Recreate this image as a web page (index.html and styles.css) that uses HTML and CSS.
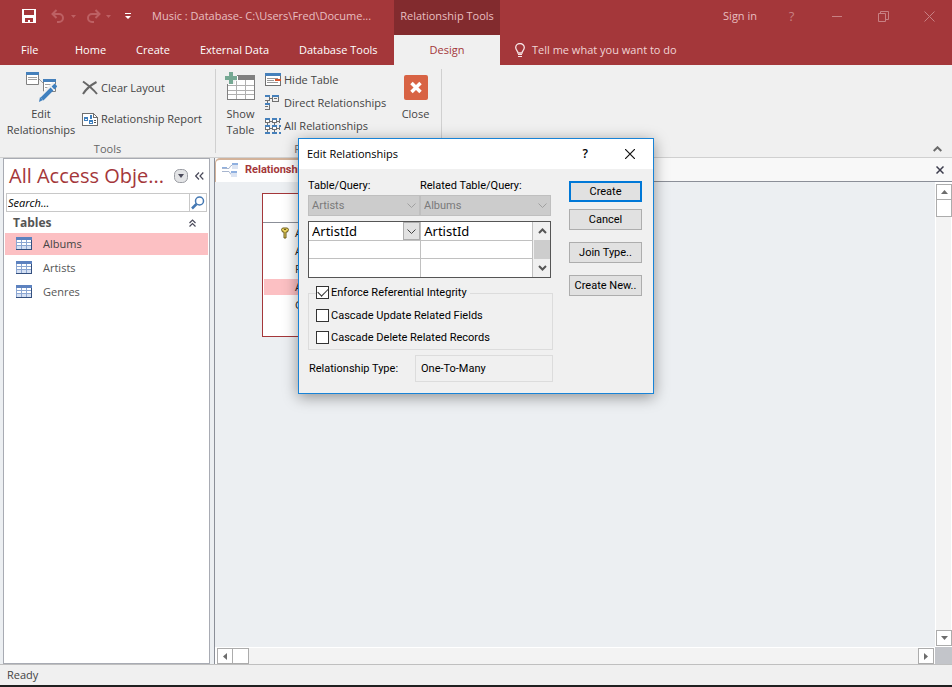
FILE: index.html
```html
<!DOCTYPE html>
<html lang="en">
<head>
  <meta charset="utf-8" />
  <title>Music : Database - Relationships</title>
  <link rel="stylesheet" href="styles.css">
</head>
<body>
  <svg class="defs" width="0" height="0">
    <symbol id="datasheet" viewBox="0 0 16 13">
      <rect width="16" height="13" fill="#34507f"/>
      <rect width="15" height="12" fill="#8ba6d2"/>
      <rect width="16" height="3" fill="#5d82bf"/>
      <path fill="#fff" d="M1 3h4v2H1zM6 3h4v2H6zM11 3h4v2h-4zM1 6h4v2H1zM6 6h4v2H6zM11 6h4v2h-4z"/>
      <path fill="#d5e0f3" d="M1 9h4v3H1zM6 9h4v3H6zM11 9h4v3h-4z"/>
    </symbol>
    <symbol id="chevron" viewBox="0 0 9 5"><path d="M.5 .5l4 4 4-4" fill="none" stroke="currentColor"/></symbol>
  </svg>

  <div class="app">
    <header class="titlebar">
      <div class="title-left">
        <div class="quick-access">
          <button type="button" aria-label="Save"><svg width="14" height="14" viewBox="0 0 14 14" shape-rendering="crispEdges"><path fill="#fff" fill-rule="evenodd" d="M0 0h14v14H0zM2 1h10v5H2zM3 9h8v4H8v-2H6v2H3z"/></svg></button>
          <button type="button" class="undo" aria-label="Undo"><svg width="26" height="14" viewBox="0 0 26 14"><path d="M5.500 1L1.500 5l4 4M2 5h6a4 4 0 0 1 0 8H6" fill="none" stroke="#bd6063" stroke-width="2"/><path fill="#bd6063" d="M20 6h5l-2.500 3z"/></svg></button>
          <button type="button" class="redo" aria-label="Redo"><svg width="26" height="14" viewBox="0 0 26 14"><path d="M9.500 1l4 4-4 4M13 5H6a4 4 0 0 0 0 8h2" fill="none" stroke="#bd6063" stroke-width="2"/><path fill="#bd6063" d="M20 6h5l-2.500 3z"/></svg></button>
          <button type="button" class="customize" aria-label="Customize"><svg width="6" height="7" viewBox="0 0 6 7"><path fill="#fff" d="M0 0h6v1H0zM0 3h6L3 6z"/></svg></button>
        </div>
        <span class="doc-title">Music : Database- C:\Users\Fred\Docume...</span>
      </div>
      <span class="context-title">Relationship Tools</span>
      <div class="window-controls">
        <a href="#">Sign in</a>
        <button type="button" aria-label="Help">?</button>
        <button type="button" aria-label="Minimize"><svg width="11" height="11" viewBox="0 0 11 11"><path d="M0 5.500h10" stroke="#c88083"/></svg></button>
        <button type="button" aria-label="Restore"><svg width="11" height="11" viewBox="0 0 11 11"><path d="M.5 2.500h7v8h-7zM2.500 2V.5h8v8H8" fill="none" stroke="#c88083"/></svg></button>
        <button type="button" aria-label="Close"><svg width="11" height="11" viewBox="0 0 11 11"><path d="M.5 .5l10 10M10.500 .5l-10 10" stroke="#c88083"/></svg></button>
      </div>
    </header>

    <nav class="tabs">
      <div class="tab-list">
        <a href="#" class="file">File</a>
        <a href="#">Home</a>
        <a href="#">Create</a>
        <a href="#">External Data</a>
        <a href="#">Database Tools</a>
      </div>
      <a href="#" class="active">Design</a>
      <a href="#" class="tell-me"><svg width="10" height="15" viewBox="0 0 10 15"><path d="M3 10C3 8 .7 7 .7 4.500a4.300 4 0 0 1 8.600 0C9.300 7 7 8 7 10z" fill="none" stroke="#f6e4e5" stroke-width="1.300"/><path fill="#f6e4e5" d="M3 11h4v1H3zM3 13h4v1H3z"/></svg>Tell me what you want to do</a>
    </nav>

    <section class="ribbon">
      <div class="group tools">
        <div class="group-body">
          <button type="button" class="big">
            <svg width="32" height="32" viewBox="0 0 32 32">
              <path fill="#fff" stroke="#808080" d="M1.500 1.500h12v12h-12zM18.500 8.500h12v12h-12z"/>
              <path fill="#4580bb" d="M1 1h13v3H1zM18 8h13v3H18z"/>
              <path fill="none" stroke="#a0a0a0" d="M3 6.500h9M3 8.500h9M14 8l4 4M20 13.500h8M20 16.500h4"/>
              <path d="M17 26L30 13" stroke="#f0f0f0" stroke-width="6"/>
              <path d="M17 28L27 18M28 17l3-3" stroke="#3f80bf" stroke-width="4"/>
              <path fill="#3f80bf" d="M15 26l3 3-4 2z"/>
            </svg>
            <span>Edit<br>Relationships</span>
          </button>
          <div class="stack">
            <button type="button" class="small"><svg width="16" height="16" viewBox="0 0 16 16"><path d="M1 1.500C6 5 11 9 15 14M14.500 2C9 5 4 9 1 14" fill="none" stroke="#666" stroke-width="2"/></svg>Clear Layout</button>
            <button type="button" class="small"><svg width="16" height="16" viewBox="0 0 16 16" shape-rendering="crispEdges"><path d="M.5 2.500h11l4 4v8H.5z" fill="#fff" stroke="#6e6e6e"/><path d="M11.500 2.500v4h4" fill="none" stroke="#6e6e6e"/><path fill="#3f80bf" fill-rule="evenodd" d="M2 6h4v4H2zM3 8h2v1H3zM7 9h4v4H7zM8 11h2v1H8zM8 4h2v4H8z"/><path fill="#555" d="M12 9h2v1h-2zM12 11h2v1h-2z"/></svg>Relationship Report</button>
          </div>
        </div>
        <div class="group-label">Tools</div>
      </div>
      <div class="group relations">
        <div class="group-body">
          <button type="button" class="big">
            <svg width="32" height="32" viewBox="0 0 32 32" shape-rendering="crispEdges">
              <path fill="#fff" stroke="#808080" d="M2.500 4.500h27v24h-27z"/>
              <path fill="#808080" d="M13 4h17v5H13z"/>
              <path fill="none" stroke="#b0b0b0" d="M3 14.500h26M3 19.500h26M3 23.500h26M11.500 9v19M20.500 9v19"/>
              <path fill="#f0f0f0" d="M0 0h12v10h-2v3H1z"/>
              <path fill="#75a893" d="M4 1h4v4h4v4H8v4H4V9H0V5h4z"/>
            </svg>
            <span>Show<br>Table</span>
          </button>
          <div class="stack tight">
            <button type="button" class="small"><svg width="16" height="16" viewBox="0 0 16 16" shape-rendering="crispEdges"><path fill="#fff" stroke="#707070" d="M.5 1.500h15v12H.5z"/><path fill="#4580bb" d="M0 1h16v3H0z"/><path stroke="#999" d="M2 6.500h11M2 8.500h7M2 10.500h11"/><path fill="#d9532c" d="M10 7h6v2h-6z"/></svg>Hide Table</button>
            <button type="button" class="small"><svg width="16" height="16" viewBox="0 0 16 16" shape-rendering="crispEdges"><path fill="none" stroke="#707070" d="M0 5.500h4.500V1M7.500 1v5h6V1M5 3.500h2M4.500 9v5.500H0M2.500 6v2M0 11.500h3M9 3.500h3"/><path fill="#4580bb" d="M0 0h5v2H0zM7 0h7v2H7zM0 8h5v2H0z"/></svg>Direct Relationships</button>
            <button type="button" class="small"><svg width="16" height="16" viewBox="0 0 16 16" shape-rendering="crispEdges"><path fill="#fff" stroke="#707070" d="M.5 .5h4v4h-4zM7.500 .5h4v4h-4zM.5 7.500h4v4h-4zM7.500 7.500h4v4h-4zM14.500 0v5M14.500 7v5"/><path stroke="#707070" d="M5 3.500h2M12 3.500h2M5 10.500h2M12 10.500h2M2.500 5v2M9.500 5v2M2.500 12v2M9.500 12v2"/><path fill="#4580bb" d="M0 0h5v2H0zM7 0h5v2H7zM14 0h2v2h-2zM0 7h5v2H0zM7 7h5v2H7zM14 7h2v2h-2zM0 14h5v2H0zM7 14h5v2H7zM14 14h2v2h-2z"/></svg>All Relationships</button>
          </div>
          <button type="button" class="big close">
            <svg width="32" height="32" viewBox="0 0 32 32"><rect x="4" y="4" width="24" height="25" rx="2" fill="#d86344"/><path d="M11.500 12l9 9M20.500 12l-9 9" stroke="#fff" stroke-width="3.500"/></svg>
            <span>Close</span>
          </button>
        </div>
        <div class="group-label">Relationships</div>
      </div>
      <button type="button" class="collapse" aria-label="Collapse the ribbon"><svg width="9" height="6" viewBox="0 0 9 6"><path d="M.7 5l3.800-3.700L8.300 5" fill="none" stroke="#6a6a6a" stroke-width="2"/></svg></button>
    </section>

    <main class="workspace">
      <aside class="nav-pane">
        <div class="nav-head">
          <h1>All Access Obje...</h1>
          <button type="button" aria-label="Choose category"><svg width="14" height="14" viewBox="0 0 14 14"><rect x=".5" y=".5" width="13" height="13" rx="5" fill="#e3e4e6" stroke="#9b9da3"/><path fill="#4b4b5b" d="M4 5h6L7 9z"/></svg></button>
          <button type="button" aria-label="Shutter bar"><svg width="9" height="8" viewBox="0 0 9 8"><path d="M4 .5L.7 4 4 7.500M8.300 .5L5 4l3.300 3.500" fill="none" stroke="#4b4b5b" stroke-width="1.200"/></svg></button>
        </div>
        <form class="search">
          <input type="text" placeholder="Search..." aria-label="Search">
          <button type="button" aria-label="Find"><svg width="14" height="14" viewBox="0 0 14 14"><circle cx="8.500" cy="5" r="4" fill="#fff" stroke="#4478b3" stroke-width="1.500"/><path d="M5.500 8L1 12.500" stroke="#4478b3" stroke-width="2.500"/></svg></button>
        </form>
        <h2>Tables <svg width="7" height="8" viewBox="0 0 7 8"><path d="M.5 4l3-3 3 3M.5 7.500l3-3 3 3" fill="none" stroke="#4b4b5b" stroke-width="1.200"/></svg></h2>
        <ul>
          <li><a href="#" class="selected"><svg width="16" height="13"><use href="#datasheet"/></svg>Albums</a></li>
          <li><a href="#"><svg width="16" height="13"><use href="#datasheet"/></svg>Artists</a></li>
          <li><a href="#"><svg width="16" height="13"><use href="#datasheet"/></svg>Genres</a></li>
        </ul>
      </aside>

      <section class="document">
        <div class="doc-tabs">
          <a href="#" class="doc-tab"><svg width="16" height="14" viewBox="0 0 16 14"><path d="M0 5.500h7l2-3h2M0 8.500h7l2 3h2" fill="none" stroke="#a8b6cf"/><path fill="#dce4f2" d="M10 2h6v4h-6zM9 10h6v4H9z"/><path fill="#8fb0e0" d="M10 0h6v2h-6zM9 8h6v2H9zM0 4h5v1H0z"/></svg>Relationships</a>
          <button type="button" aria-label="Close tab"><svg width="8" height="8" viewBox="0 0 8 8"><path d="M.5 .5l7 7M7.500 .5l-7 7" stroke="#3d3d4d" stroke-width="1.500"/></svg></button>
        </div>
        <div class="canvas-wrap">
          <div class="canvas">
            <div class="table-node">
              <div class="node-title">Albums</div>
              <ul>
                <li class="key"><svg width="8" height="12" viewBox="0 0 8 12"><path d="M1.500 1h5L7.500 2.500 6.500 5H5v6H3V5H1.500L.5 2.500z" fill="#ead35e" stroke="#6d5c1c"/><path fill="#6d5c1c" d="M3 2h2v1H3z"/></svg>AlbumId</li>
                <li>AlbumName</li>
                <li>ReleaseDate</li>
                <li class="selected">ArtistId</li>
                <li>GenreId</li>
              </ul>
            </div>
          </div>
          <div class="scroll vertical">
            <button type="button" aria-label="Scroll up"><svg width="7" height="4" viewBox="0 0 7 4"><path fill="#6d6d6d" d="M0 4l3.500-4L7 4z"/></svg></button>
            <span class="thumb"></span>
            <button type="button" class="end" aria-label="Scroll down"><svg width="7" height="4" viewBox="0 0 7 4"><path fill="#6d6d6d" d="M0 0h7L3.500 4z"/></svg></button>
          </div>
          <div class="scroll horizontal">
            <button type="button" aria-label="Scroll left"><svg width="4" height="7" viewBox="0 0 4 7"><path fill="#6d6d6d" d="M4 0v7L0 3.500z"/></svg></button>
            <span class="thumb"></span>
            <button type="button" class="end" aria-label="Scroll right"><svg width="4" height="7" viewBox="0 0 4 7"><path fill="#6d6d6d" d="M0 0l4 3.500L0 7z"/></svg></button>
          </div>
          <div class="corner"></div>
        </div>
      </section>
    </main>

    <footer class="status">Ready</footer>
    <div class="taskbar"></div>

    <div class="dialog" role="dialog" aria-labelledby="dialog-title">
      <div class="dialog-head">
        <span id="dialog-title">Edit Relationships</span>
        <button type="button" aria-label="Help">?</button>
        <button type="button" aria-label="Close"><svg width="10" height="10" viewBox="0 0 10 10"><path d="M0 0l10 10M10 0L0 10" stroke="#111" stroke-width="1.200"/></svg></button>
      </div>
      <form class="dialog-body">
        <div class="fields">
          <div class="sources">
            <label for="table">Table/Query:</label>
            <label for="related">Related Table/Query:</label>
            <div class="select">
              <select id="table" disabled><option>Artists</option></select>
              <svg width="9" height="5"><use href="#chevron"/></svg>
            </div>
            <div class="select">
              <select id="related" disabled><option>Albums</option></select>
              <svg width="9" height="5"><use href="#chevron"/></svg>
            </div>
          </div>
          <div class="join-grid">
            <table>
              <tr>
                <td><div class="select"><select aria-label="Field"><option>ArtistId</option></select><span class="drop"><svg width="9" height="5"><use href="#chevron"/></svg></span></div></td>
                <td>ArtistId</td>
              </tr>
              <tr><td></td><td></td></tr>
              <tr><td></td><td></td></tr>
            </table>
            <div class="grid-scroll">
              <button type="button" aria-label="Up"><svg width="9" height="6" viewBox="0 0 9 6"><path d="M1 5l3.500-3.500L8 5" fill="none" stroke="#555" stroke-width="2"/></svg></button>
              <span></span>
              <button type="button" aria-label="Down"><svg width="9" height="6" viewBox="0 0 9 6"><path d="M1 1l3.500 3.500L8 1" fill="none" stroke="#555" stroke-width="2"/></svg></button>
            </div>
          </div>
          <fieldset>
            <legend><label><input type="checkbox" checked>Enforce Referential Integrity</label></legend>
            <label><input type="checkbox">Cascade Update Related Fields</label>
            <label><input type="checkbox">Cascade Delete Related Records</label>
          </fieldset>
          <div class="type-row">
            <span>Relationship Type:</span>
            <output>One-To-Many</output>
          </div>
        </div>
        <div class="actions">
          <button type="button" class="default">Create</button>
          <button type="button">Cancel</button>
          <button type="button" class="spaced">Join Type..</button>
          <button type="button" class="spaced">Create New..</button>
        </div>
      </form>
    </div>
  </div>
</body>
</html>
```
FILE: styles.css
```css
* { box-sizing: border-box; }
html, body { margin: 0; padding: 0; }
body { font-family: "Open Sans", "Noto Sans", sans-serif; font-size: 11px; line-height: 16px; color: #444; }
button, input, select { font: inherit; color: inherit; margin: 0; padding: 0; border: none; background: none; }
a { color: inherit; text-decoration: none; }
svg { display: block; flex: none; }
ul { list-style: none; margin: 0; padding: 0; }
h1, h2 { margin: 0; }
.defs { position: absolute; }
.app { position: relative; min-height: 100vh; display: flex; flex-direction: column; background: #f0f0f0; overflow: hidden; }

/* title bar and tabs */
.titlebar, .tabs { display: grid; grid-template-columns: 394px 106px 1fr; background: #a4373a; color: #e8bfc0; }
.titlebar { height: 35px; }
.title-left { display: flex; align-items: center; padding-left: 22px; padding-bottom: 3px; }
.quick-access { display: flex; align-items: center; width: 130px; }
.undo { margin-left: 15px; }
.redo { margin-left: 9px; }
.customize { margin-left: 13px; }
.doc-title { white-space: nowrap; }
.context-title { background: #822b2e; text-align: center; line-height: 32px; }
.window-controls { display: flex; align-items: center; justify-content: flex-end; padding: 0 17px 3px 0; }
.window-controls a { margin-right: 29px; }
.window-controls button { width: 11px; margin-left: 35px; }
.window-controls a + button { margin: 0; color: #c88083; font-size: 13px; }
.tabs { height: 30px; line-height: 30px; color: #fff; }
.tab-list { display: flex; gap: 30px; padding-left: 21px; white-space: nowrap; }
.tabs .file { width: 24px; }
.tabs .active { background: #f0f0f0; color: #a4373a; text-align: center; }
.tabs .tell-me { display: flex; align-items: center; gap: 7px; padding-left: 15px; color: #f0d4d5; }

/* ribbon */
.ribbon { display: flex; height: 93px; padding-top: 4px; border-bottom: 1px solid #d0d0d0; }
.group { display: flex; flex-direction: column; height: 84px; border-right: 1px solid #d0d0d0; }
.tools { width: 216px; }
.relations { width: 226px; }
.group-body { display: flex; height: 72px; }
.group-label { text-align: center; color: #666; line-height: 22px; }
.big { display: flex; flex-direction: column; align-items: center; gap: 3px; padding-top: 2px; text-align: center; white-space: nowrap; }
.tools .big { width: 82px; }
.relations .big { width: 49px; }
.stack { display: flex; flex-direction: column; gap: 15px; padding-top: 11px; }
.stack.tight { gap: 7px; padding-top: 3px; width: 126px; }
.small { display: flex; align-items: center; gap: 3px; white-space: nowrap; }
.collapse { margin: auto 10px 5px auto; }

/* navigation pane */
.workspace { flex: 1; display: flex; background: #eceff2; }
.nav-pane { width: 207px; margin: 0 4px 0 3px; background: #fff; border: 1px solid #a8abb3; padding: 0 1px; }
.nav-head { display: flex; align-items: center; height: 34px; padding: 0 4px; }
.nav-head h1 { flex: 1; font-size: 20px; font-weight: normal; line-height: 36px; color: #a4373a; white-space: nowrap; }
.nav-head button + button { margin-left: 7px; }
.search { display: flex; height: 19px; margin: 0 1px; border: 1px solid #c8c8c8; }
.search input { flex: 1; min-width: 0; padding: 0 1px; font-style: italic; }
.search input::placeholder { color: #000; opacity: 1; }
.search button { padding: 0 1px; border-left: 1px solid #c8c8c8; }
.nav-pane h2 { display: flex; align-items: center; justify-content: space-between; padding: 0 12px 0 8px; font-size: 12px; line-height: 21px; color: #555; }
.nav-pane li a { display: flex; align-items: center; gap: 11px; height: 22px; margin-bottom: 2px; padding-left: 11px; color: #555; }
.nav-pane li svg { margin-bottom: 2px; }
.selected { background: #fcc0c3; }
.nav-pane .selected { color: #444; }

/* relationships window */
.document { flex: 1; display: flex; flex-direction: column; border-left: 1px solid #8b8f98; }
.doc-tabs { display: flex; justify-content: space-between; height: 24px; padding-right: 8px; background: #f8f8f8; border-bottom: 1px solid #8b8f98; }
.doc-tab { display: flex; align-items: center; gap: 7px; width: 110px; height: 24px; padding: 0 0 2px 6px; background: #fff; border: 1px solid #d2b29a; border-width: 2px 1px 0 1px; border-radius: 5px 5px 0 0; color: #a4373a; font-family: Roboto, sans-serif; font-weight: bold; }
.canvas-wrap { flex: 1; display: grid; grid-template-columns: 1fr 17px; grid-template-rows: 1fr 17px; }
.canvas { padding: 11px 0 0 47px; }
.table-node { width: 112px; height: 144px; background: #fff; border: 1px solid #a4373a; color: #222; }
.node-title { height: 29px; line-height: 28px; border-bottom: 1px solid #8b8f98; text-align: center; }
.table-node li { display: flex; align-items: center; height: 16px; margin: 2px 1px 0; padding-left: 31px; }
.table-node .key { padding-left: 17px; gap: 6px; }
.scroll { display: flex; background: #f3f3f3; border: 0 solid #fff; }
.scroll button, .thumb { display: flex; align-items: center; justify-content: center; width: 16px; height: 16px; background: #fff; border: 1px solid #acacac; }
.scroll .end { margin: auto 0 0 auto; }
.vertical { flex-direction: column; border-width: 2px 1px 1px 1px; }
.vertical .thumb { margin-top: -1px; height: 18px; }
.vertical .end { margin: auto 0 0; }
.horizontal { border-width: 1px 1px 0 2px; }
.horizontal .thumb { width: 17px; margin-left: -1px; }
.corner { background: #c3c5ca; }
.status { height: 21px; line-height: 20px; padding-left: 7px; border-top: 1px solid #bfbfbf; }
.taskbar { height: 2px; background: #202020; }

/* edit relationships dialog */
.dialog { position: absolute; left: 298px; top: 138px; width: 356px; background: #f0f0f0; border: 1px solid #1883d7; box-shadow: 0 3px 14px rgba(0, 0, 0, .4); color: #000; }
.dialog-head { display: flex; align-items: center; height: 30px; padding: 0 18px 0 8px; background: #fff; }
.dialog-head span { flex: 1; }
.dialog-head button { margin-left: 37px; font-size: 12px; font-weight: 600; }
.dialog-body { display: flex; justify-content: space-between; padding: 8px 11px 11px 9px; font-family: Roboto, "Open Sans", sans-serif; }
.fields { width: 245px; }
.sources { display: grid; grid-template-columns: 112px 131px; }
.sources label { line-height: 18px; }
.select { display: grid; align-items: center; }
.select select, .select > svg, .drop { grid-area: 1 / 1; }
.select select { appearance: none; width: 100%; outline: none; }
.select > svg { justify-self: end; margin-right: 4px; color: #a0a0a0; }
.sources select { height: 21px; padding-left: 3px; background: #ccc; border: 1px solid #bfbfbf; color: #7a7a7a; opacity: 1; }
.join-grid { display: flex; width: 243px; height: 57px; margin-top: 5px; border: 1px solid #555; background: #fff; }
.join-grid table { width: 224px; border-collapse: collapse; table-layout: fixed; font-family: "Noto Sans", sans-serif; font-size: 13px; line-height: 18px; }
.join-grid td { height: 18px; padding: 0 0 0 3px; border: 1px solid #c0c0c0; border-top: none; }
.join-grid td:first-child { border-left: none; }
.join-grid tr:last-child td { border-bottom: none; }
.drop { display: flex; align-items: center; justify-content: center; justify-self: end; width: 17px; height: 18px; background: #e1e1e1; border: 1px solid #adadad; color: #444; pointer-events: none; }
.grid-scroll { flex: 1; display: flex; flex-direction: column; padding-left: 1px; background: #f0f0f0; }
.grid-scroll button { display: flex; align-items: center; justify-content: center; height: 18px; }
.grid-scroll span { flex: 1; background: #cdcdcd; }
fieldset { margin: 7px 0 0; padding: 7px 7px 3px; border: 1px solid #dcdcdc; min-width: 0; }
legend { padding: 0; }
fieldset label { display: flex; align-items: center; gap: 2px; height: 16px; }
fieldset > label + label { margin-top: 6px; }
legend label { padding-right: 3px; }
input[type=checkbox] { appearance: none; width: 13px; height: 13px; margin-bottom: 2px; background: #fff; border: 1px solid #333; display: grid; place-items: center; }
input[type=checkbox]:checked::before { content: ""; width: 9px; height: 5px; border: solid #333; border-width: 0 0 1px 1px; transform: translateY(-1px) rotate(-45deg); }
.type-row { display: flex; align-items: center; justify-content: space-between; margin-top: 5px; padding-left: 1px; }
output { width: 138px; height: 27px; padding-left: 5px; line-height: 25px; border: 1px solid #dcdcdc; }
.actions { display: flex; flex-direction: column; gap: 7px; width: 73px; padding-top: 4px; }
.actions button { height: 21px; background: #e1e1e1; border: 1px solid #adadad; white-space: nowrap; }
.actions .default { border: 2px solid #0078d7; }
.actions .spaced { margin-top: 5px; }
```
